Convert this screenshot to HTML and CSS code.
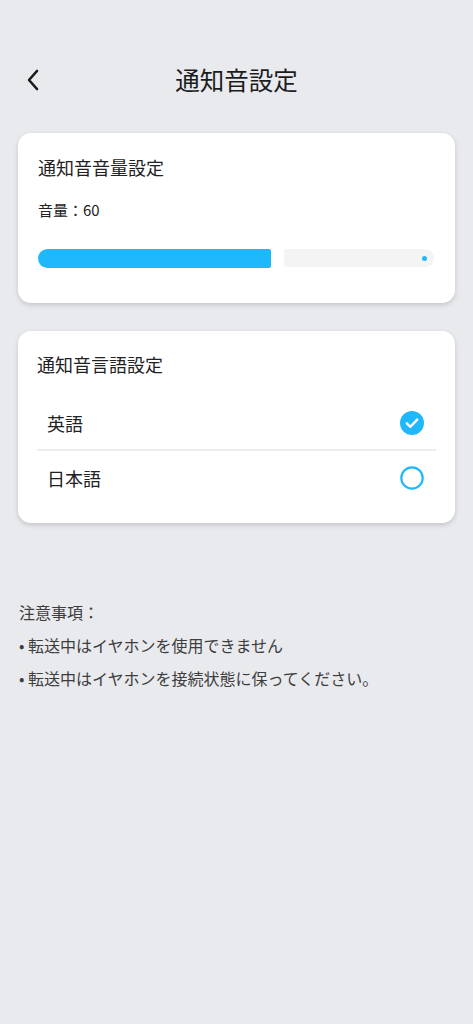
FILE: index.html
```html
<!DOCTYPE html>
<html lang="ja">
<head>
<meta charset="utf-8">
<link rel="stylesheet" href="styles.css">
</head>
<body>
<div class="page">
  <header class="topbar">
    <span class="back">
      <svg width="16" height="24" viewBox="0 0 16 24"><path d="M12 3 L4 12 L12 21" fill="none" stroke="#1a1a1a" stroke-width="2.6" stroke-linecap="round" stroke-linejoin="round"/></svg>
    </span>
    <h1 class="title">通知音設定</h1>
  </header>

  <section class="card volume">
    <h2 class="card-title">通知音音量設定</h2>
    <div class="vol-label">音量：60</div>
    <div class="slider">
      <div class="track-active"></div>
      <div class="track-rest"><span class="dot"></span></div>
    </div>
  </section>

  <section class="card lang">
    <h2 class="card-title">通知音言語設定</h2>
    <div class="option">
      <span class="opt-text">英語</span>
      <svg class="radio" width="24" height="24" viewBox="0 0 24 24"><circle cx="12" cy="12" r="12" fill="#20b8fc"/><path d="M6.8 12.3 L10.4 15.8 L17.2 8.6" fill="none" stroke="#fff" stroke-width="2.4" stroke-linecap="round" stroke-linejoin="round"/></svg>
    </div>
    <div class="divider"></div>
    <div class="option">
      <span class="opt-text">日本語</span>
      <svg class="radio" width="24" height="24" viewBox="0 0 24 24"><circle cx="12" cy="12" r="10.7" fill="none" stroke="#20b8fc" stroke-width="2.2"/></svg>
    </div>
  </section>

  <section class="notes">
    <p class="note-head">注意事項：</p>
    <p class="note">• 転送中はイヤホンを使用できません</p>
    <p class="note">• 転送中はイヤホンを接続状態に保ってください。</p>
  </section>
</div>
</body>
</html>
```

FILE: styles.css
```css
* { box-sizing: border-box; }
html, body {
  margin: 0;
  padding: 0;
  background: #e9eaee;
}
body {
  font-family: "Noto Sans CJK JP", "Noto Sans", sans-serif;
  color: #222;
  width: 473px;
  height: 1024px;
}
.page {
  padding: 56px 18px 0 18px;
}
.topbar {
  position: relative;
  height: 48px;
  display: flex;
  align-items: center;
  justify-content: center;
}
.back {
  position: absolute;
  left: 7px;
  top: 12px;
  width: 16px;
  height: 24px;
  display: flex;
}
.title {
  margin: 0;
  font-size: 24.5px;
  font-weight: 400;
  color: #1c1c1c;
  line-height: 48px;
}
.card {
  background: #fff;
  border-radius: 13px;
  box-shadow: 0 2px 5px rgba(0,0,0,0.16);
}
.volume {
  margin-top: 29px;
  height: 170px;
  padding: 20px 21px 0 20px;
}
.card-title {
  margin: 0;
  font-size: 18px;
  font-weight: 400;
  line-height: 28px;
  color: #222;
}
.vol-label {
  margin-top: 17px;
  font-size: 15px;
  line-height: 24px;
  color: #222;
}
.slider {
  margin-top: 26px;
  display: flex;
  align-items: center;
  gap: 13px;
  height: 20px;
}
.track-active {
  width: 233px;
  height: 19px;
  background: #20b8fc;
  border-radius: 10px 2px 2px 10px;
}
.track-rest {
  flex: 1;
  height: 18px;
  background: #f4f4f5;
  border-radius: 2px 9px 9px 2px;
  display: flex;
  align-items: center;
  justify-content: flex-end;
  padding-right: 7px;
}
.dot {
  width: 5px;
  height: 5px;
  border-radius: 50%;
  background: #20b8fc;
}
.lang {
  margin-top: 28px;
  height: 192px;
  padding: 19px 19px 0 19px;
}
.option {
  display: flex;
  align-items: center;
  justify-content: space-between;
  height: 53px;
  padding: 0 12px 0 10px;
}
.lang .card-title + .option {
  margin-top: 18px;
}
.opt-text {
  font-size: 18px;
  color: #222;
}
.divider {
  height: 2px;
  background: #ececee;
}
.notes {
  margin-top: 73px;
  padding-left: 1px;
}
.notes p {
  margin: 0;
  font-size: 16px;
  line-height: 33px;
  color: #3d3d3d;
}
```
